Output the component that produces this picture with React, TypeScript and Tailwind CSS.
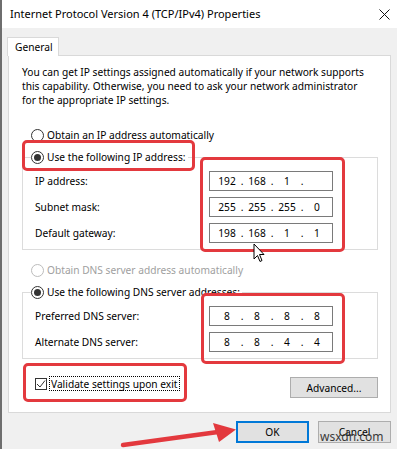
import React from "react";

const Radio = ({ checked, disabled }: { checked?: boolean; disabled?: boolean }) => (
  <span
    className={`w-[13px] h-[13px] rounded-full border flex items-center justify-center bg-white shrink-0 ${
      disabled ? "border-[#bcbcbc]" : "border-[#333333]"
    }`}
  >
    {checked && <span className="w-[7px] h-[7px] rounded-full bg-[#333333]" />}
  </span>
);

const IpBox = ({ parts }: { parts: string[] }) => (
  <div className="h-[20px] w-[124px] border border-[#7a7a7a] bg-white flex items-center pl-[5px]">
    {parts.map((p, i) => (
      <React.Fragment key={i}>
        <span className="w-[24px] text-center">{p}</span>
        {i < 3 && <span className="w-[6px] text-center">.</span>}
      </React.Fragment>
    ))}
  </div>
);

const Group = ({ legend, rows }: { legend: string; rows: { label: string; parts: string[] }[] }) => (
  <fieldset className="border border-[#dcdcdc] px-[12px] pt-[7px] pb-[6px]">
    <legend className="-ml-[4px]">
      <span className="flex items-center gap-[3px] h-[14px] bg-white pr-[2px]">
        <Radio checked />
        <span>{legend}</span>
      </span>
    </legend>
    <div className="grid grid-cols-[174px_124px] gap-y-[6px] items-center">
      {rows.map((r) => (
        <React.Fragment key={r.label}>
          <span>{r.label}</span>
          <IpBox parts={r.parts} />
        </React.Fragment>
      ))}
    </div>
  </fieldset>
);

const RedBox = ({ className }: { className: string }) => (
  <div className={`absolute border-[3px] border-[#e3393e] rounded-[5px] ${className}`} />
);

export default function App() {
  return (
    <div className="relative w-[397px] h-[449px] overflow-hidden bg-[#f0f0f0] border-l-2 border-[#6e6e6e] text-[10.2px] leading-[14px] text-black font-['Noto_Sans',sans-serif]">
      <div className="h-[28px] bg-white flex items-center justify-between pl-[8px] pr-[7px]">
        <span className="text-[11px]">Internet Protocol Version 4 (TCP/IPv4) Properties</span>
        <svg width="11" height="11" viewBox="0 0 11 11">
          <path d="M0.5 0.5 L10.5 10.5 M10.5 0.5 L0.5 10.5" stroke="#111" strokeWidth="1" />
        </svg>
      </div>

      <div className="relative z-10 ml-[5px] mt-[9px] -mb-px w-[52px] h-[19px] bg-white border border-b-0 border-[#d9d9d9] pl-[7px] flex items-center">
        General
      </div>

      <div className="ml-[6px] w-[383px] h-[358px] bg-white border border-[#d9d9d9] pt-[9px] pl-[13px] pr-[12px]">
        <p>
          You can get IP settings assigned automatically if your network supports
          <br />
          this capability. Otherwise, you need to ask your network administrator
          <br />
          for the appropriate IP settings.
        </p>

        <div className="mt-[21px] h-[14px] flex items-center gap-[3px] pl-[9px]">
          <Radio />
          <span>Obtain an IP address automatically</span>
        </div>

        <div className="mt-[8px]">
          <Group
            legend="Use the following IP address:"
            rows={[
              { label: "IP address:", parts: ["192", "168", "1", ""] },
              { label: "Subnet mask:", parts: ["255", "255", "255", "0"] },
              { label: "Default gateway:", parts: ["198", "168", "1", "1"] },
            ]}
          />
        </div>

        <div className="mt-[13px] h-[14px] flex items-center gap-[3px] pl-[9px] text-[#a0a0a0]">
          <Radio disabled />
          <span>Obtain DNS server address automatically</span>
        </div>

        <div className="mt-[8px]">
          <Group
            legend="Use the following DNS server addresses:"
            rows={[
              { label: "Preferred DNS server:", parts: ["8", "8", "8", "8"] },
              { label: "Alternate DNS server:", parts: ["8", "8", "4", "4"] },
            ]}
          />
        </div>

        <div className="mt-[17px] flex justify-between items-start">
          <div className="flex items-center gap-[2px] pl-[13px] h-[15px]">
            <span className="w-[12px] h-[12px] border border-[#333333] flex items-center justify-center">
              <svg width="10" height="10" viewBox="0 0 10 10">
                <path d="M1 5 L4 8 L9 1.5" fill="none" stroke="#333" strokeWidth="1" />
              </svg>
            </span>
            <span className="border border-dotted border-black px-[1px] h-[15px] flex items-center">
              Validate settings upon exit
            </span>
          </div>
          <button className="mt-[1px] w-[88px] h-[21px] bg-[#e1e1e1] border border-[#adadad] flex items-center justify-center">
            Advanced...
          </button>
        </div>
      </div>

      <div className="flex justify-end gap-[9px] mt-[8px] pr-[6px]">
        <button className="w-[73px] h-[22px] bg-[#e1e1e1] border-2 border-[#0078d7] flex items-center justify-center">
          OK
        </button>
        <button className="w-[73px] h-[22px] bg-[#e1e1e1] border border-[#adadad] flex items-center justify-center">
          Cancel
        </button>
      </div>

      <RedBox className="left-[20px] top-[140px] w-[173px] h-[31px]" />
      <RedBox className="left-[198px] top-[157px] w-[145px] h-[95px]" />
      <RedBox className="left-[199px] top-[293px] w-[144px] h-[71px]" />
      <RedBox className="left-[21px] top-[363px] w-[164px] h-[39px]" />

      <svg className="absolute left-[251px] top-[243px]" width="13" height="21" viewBox="0 0 13 21">
        <path d="M1 1 L1 16 L4.5 12.5 L7 18.5 L9 17.5 L6.5 11.5 L11 11.5 Z" fill="#fff" stroke="#000" strokeWidth="1" strokeLinejoin="round" />
      </svg>

      <svg className="absolute left-0 top-0 pointer-events-none" width="397" height="449" viewBox="0 0 397 449">
        <path d="M121 445 L216 432" stroke="#e3393e" strokeWidth="4.5" strokeLinecap="round" />
        <path d="M234 429.5 L211 423 L217 442 Z" fill="#e3393e" />
      </svg>

      <span className="absolute left-[318px] top-[430px] text-[12px] leading-[14px] text-[#3a3a3a]">
        wsxdn.com
      </span>
    </div>
  );
}
